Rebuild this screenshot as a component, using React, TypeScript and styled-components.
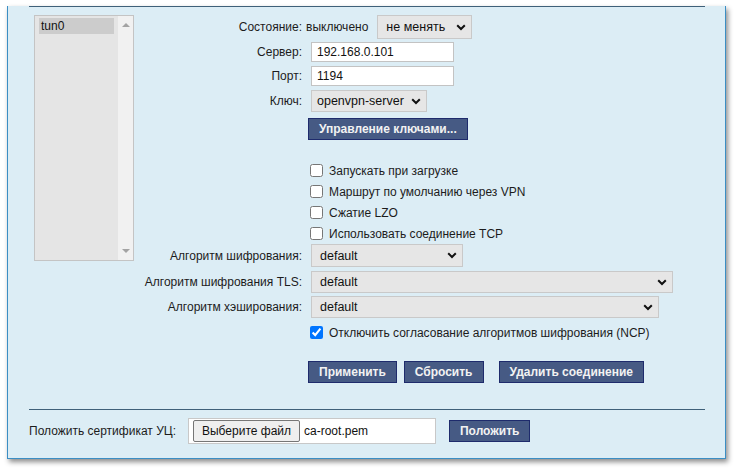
import styled, { createGlobalStyle } from "styled-components";

const GlobalStyle = createGlobalStyle`
  body {
    margin: 0;
    background: #ffffff;
    font-family: "Liberation Sans", Arial, sans-serif;
    font-size: 12px;
    color: #1c1c1c;
  }
`;

function Chevron() {
  return (
    <svg width="10" height="7" viewBox="0 0 10 7">
      <path d="M1.2 1.2 L5 5 L8.8 1.2" fill="none" stroke="#111" strokeWidth="2" />
    </svg>
  );
}

function Select({ value, width, height, pad }: { value: string; width: number; height: number; pad: number }) {
  return (
    <SelectBox $width={width} $height={height} $pad={pad}>
      <span>{value}</span>
      <Chevron />
    </SelectBox>
  );
}

function Check({ label, checked, mt }: { label: string; checked?: boolean; mt?: number }) {
  return (
    <Row $mt={mt ?? 0}>
      <CheckLine>
        <CheckBox type="checkbox" defaultChecked={checked} />
        <span>{label}</span>
      </CheckLine>
    </Row>
  );
}

export default function App() {
  return (
    <Page>
      <GlobalStyle />
      <Panel>
        <Rule $mt={0} />
        <Main>
          <ListBox>
            <ListItems>
              <ListItem>tun0</ListItem>
            </ListItems>
            <ScrollBar>
              <Arrow $up />
              <Arrow />
            </ScrollBar>
          </ListBox>

          <Form>
            <Row $mt={0}>
              <Label>Состояние:</Label>
              <StateCell>
                <span>выключено</span>
                <Select value="не менять" width={95} height={24} pad={8} />
              </StateCell>
            </Row>
            <Row $mt={3}>
              <Label>Сервер:</Label>
              <TextInput defaultValue="192.168.0.101" />
            </Row>
            <Row $mt={4}>
              <Label>Порт:</Label>
              <TextInput defaultValue="1194" />
            </Row>
            <Row $mt={4}>
              <Label>Ключ:</Label>
              <Offset>
                <Select value="openvpn-server" width={116} height={22} pad={5} />
              </Offset>
            </Row>
            <Row $mt={6}>
              <Cell>
                <Button>Управление ключами...</Button>
              </Cell>
            </Row>

            <Check mt={20} label="Запускать при загрузке" />
            <Check label="Маршрут по умолчанию через VPN" />
            <Check label="Сжатие LZO" />
            <Check label="Использовать соединение TCP" />

            <Row $mt={0}>
              <Label>Алгоритм шифрования:</Label>
              <Offset>
                <Select value="default" width={152} height={23} pad={8} />
              </Offset>
            </Row>
            <Row $mt={4}>
              <Label>Алгоритм шифрования TLS:</Label>
              <Offset>
                <Select value="default" width={362} height={22} pad={8} />
              </Offset>
            </Row>
            <Row $mt={3}>
              <Label>Алгоритм хэширования:</Label>
              <Offset>
                <Select value="default" width={348} height={22} pad={8} />
              </Offset>
            </Row>
            <Check mt={4} checked label="Отключить согласование алгоритмов шифрования (NCP)" />

            <Row $mt={18}>
              <ButtonBar>
                <Button>Применить</Button>
                <Button>Сбросить</Button>
                <Button $ml={8}>Удалить соединение</Button>
              </ButtonBar>
            </Row>
          </Form>
        </Main>

        <Rule $mt={26} />

        <UploadRow>
          <span>Положить сертификат УЦ:</span>
          <FileBox>
            <FileButton>Выберите файл</FileButton>
            <span>ca-root.pem</span>
          </FileBox>
          <Button $ml={1}>Положить</Button>
        </UploadRow>
      </Panel>
    </Page>
  );
}

/** styles */

const Page = styled.div`
  width: 739px;
  height: 475px;
  box-sizing: border-box;
  padding: 6px 0 0 7px;
`;

const Panel = styled.div`
  width: 719px;
  box-sizing: border-box;
  background: #dcedf5;
  border: 1px solid #3b8ec4;
  border-top: none;
  box-shadow: 2px 3px 5px rgba(0, 0, 0, 0.45);
  padding-bottom: 14px;
`;

const Rule = styled.div<{ $mt: number }>`
  margin: ${(p) => p.$mt}px 20px 0 21px;
  border-top: 1px solid #3f6079;
`;

const Main = styled.div`
  display: flex;
  align-items: flex-start;
  margin-top: 8px;
  padding-left: 26px;
`;

const ListBox = styled.div`
  display: flex;
  width: 100px;
  height: 246px;
  box-sizing: border-box;
  border: 1px solid #c4c4c4;
  background: #e5e5e5;
`;

const ListItems = styled.div`
  flex: 1;
  padding: 2px 4px 0 4px;
`;

const ListItem = styled.div`
  height: 16px;
  line-height: 16px;
  padding-left: 2px;
  background: #cccccc;
  color: #111;
`;

const ScrollBar = styled.div`
  width: 15px;
  background: #f1f1f1;
  display: flex;
  flex-direction: column;
  justify-content: space-between;
  align-items: center;
  padding: 7px 0;
  box-sizing: border-box;
`;

const Arrow = styled.div<{ $up?: boolean }>`
  width: 0;
  height: 0;
  border-left: 4px solid transparent;
  border-right: 4px solid transparent;
  ${(p) => (p.$up ? "border-bottom: 4px solid #a3a3a3;" : "border-top: 4px solid #a3a3a3;")}
`;

const Form = styled.div`
  display: flex;
  flex-direction: column;
`;

const Row = styled.div<{ $mt: number }>`
  display: grid;
  grid-template-columns: 169px auto;
  column-gap: 5px;
  align-items: center;
  margin-top: ${(p) => p.$mt}px;
`;

const Label = styled.div`
  text-align: right;
  padding-right: 1px;
  white-space: nowrap;
`;

const Cell = styled.div`
  grid-column: 2;
  display: flex;
`;

const Offset = styled.div`
  display: flex;
  margin-left: 3px;
`;

const StateCell = styled.div`
  display: flex;
  align-items: center;
  gap: 9px;
  margin-left: -2px;
`;

const SelectBox = styled.div<{ $width: number; $height: number; $pad: number }>`
  display: flex;
  align-items: center;
  justify-content: space-between;
  width: ${(p) => p.$width}px;
  height: ${(p) => p.$height}px;
  box-sizing: border-box;
  padding: 0 5px 0 ${(p) => p.$pad}px;
  background: #e6e6e6;
  border: 1px solid #c9c9c9;
  font-size: 12.5px;
  color: #111;
`;

const TextInput = styled.input`
  margin: 0 0 0 3px;
  width: 143px;
  height: 20px;
  box-sizing: border-box;
  border: 1px solid #c3c3c3;
  background: #fff;
  padding: 0 5px;
  font-family: "Liberation Sans", Arial, sans-serif;
  font-size: 12px;
  color: #111;
  outline: none;
`;

const CheckLine = styled.label`
  grid-column: 2;
  display: flex;
  align-items: center;
  height: 21px;
  gap: 6px;
`;

const CheckBox = styled.input`
  width: 13px;
  height: 13px;
  margin: 0 0 0 2px;
`;

const Button = styled.button<{ $ml?: number }>`
  height: 22px;
  padding: 0 10px;
  margin-left: ${(p) => p.$ml ?? 0}px;
  background: #465a84;
  border: 1px solid #1e2b6c;
  border-radius: 0;
  color: #f2f2f2;
  font-family: "Liberation Sans", Arial, sans-serif;
  font-size: 12px;
  font-weight: bold;
  white-space: nowrap;
`;

const ButtonBar = styled.div`
  grid-column: 2;
  display: flex;
  gap: 7px;
`;

const UploadRow = styled.div`
  display: flex;
  align-items: center;
  margin-top: 8px;
  padding-left: 21px;
  height: 26px;
  gap: 12px;
`;

const FileBox = styled.div`
  display: flex;
  align-items: center;
  gap: 4px;
  width: 248px;
  height: 26px;
  box-sizing: border-box;
  padding-left: 4px;
  background: #fff;
  border: 1px solid #c8c8c8;
  color: #111;
`;

const FileButton = styled.div`
  height: 22px;
  line-height: 20px;
  box-sizing: border-box;
  padding: 0 8px;
  border: 1px solid #767676;
  border-radius: 2px;
  background: #efefef;
`;
